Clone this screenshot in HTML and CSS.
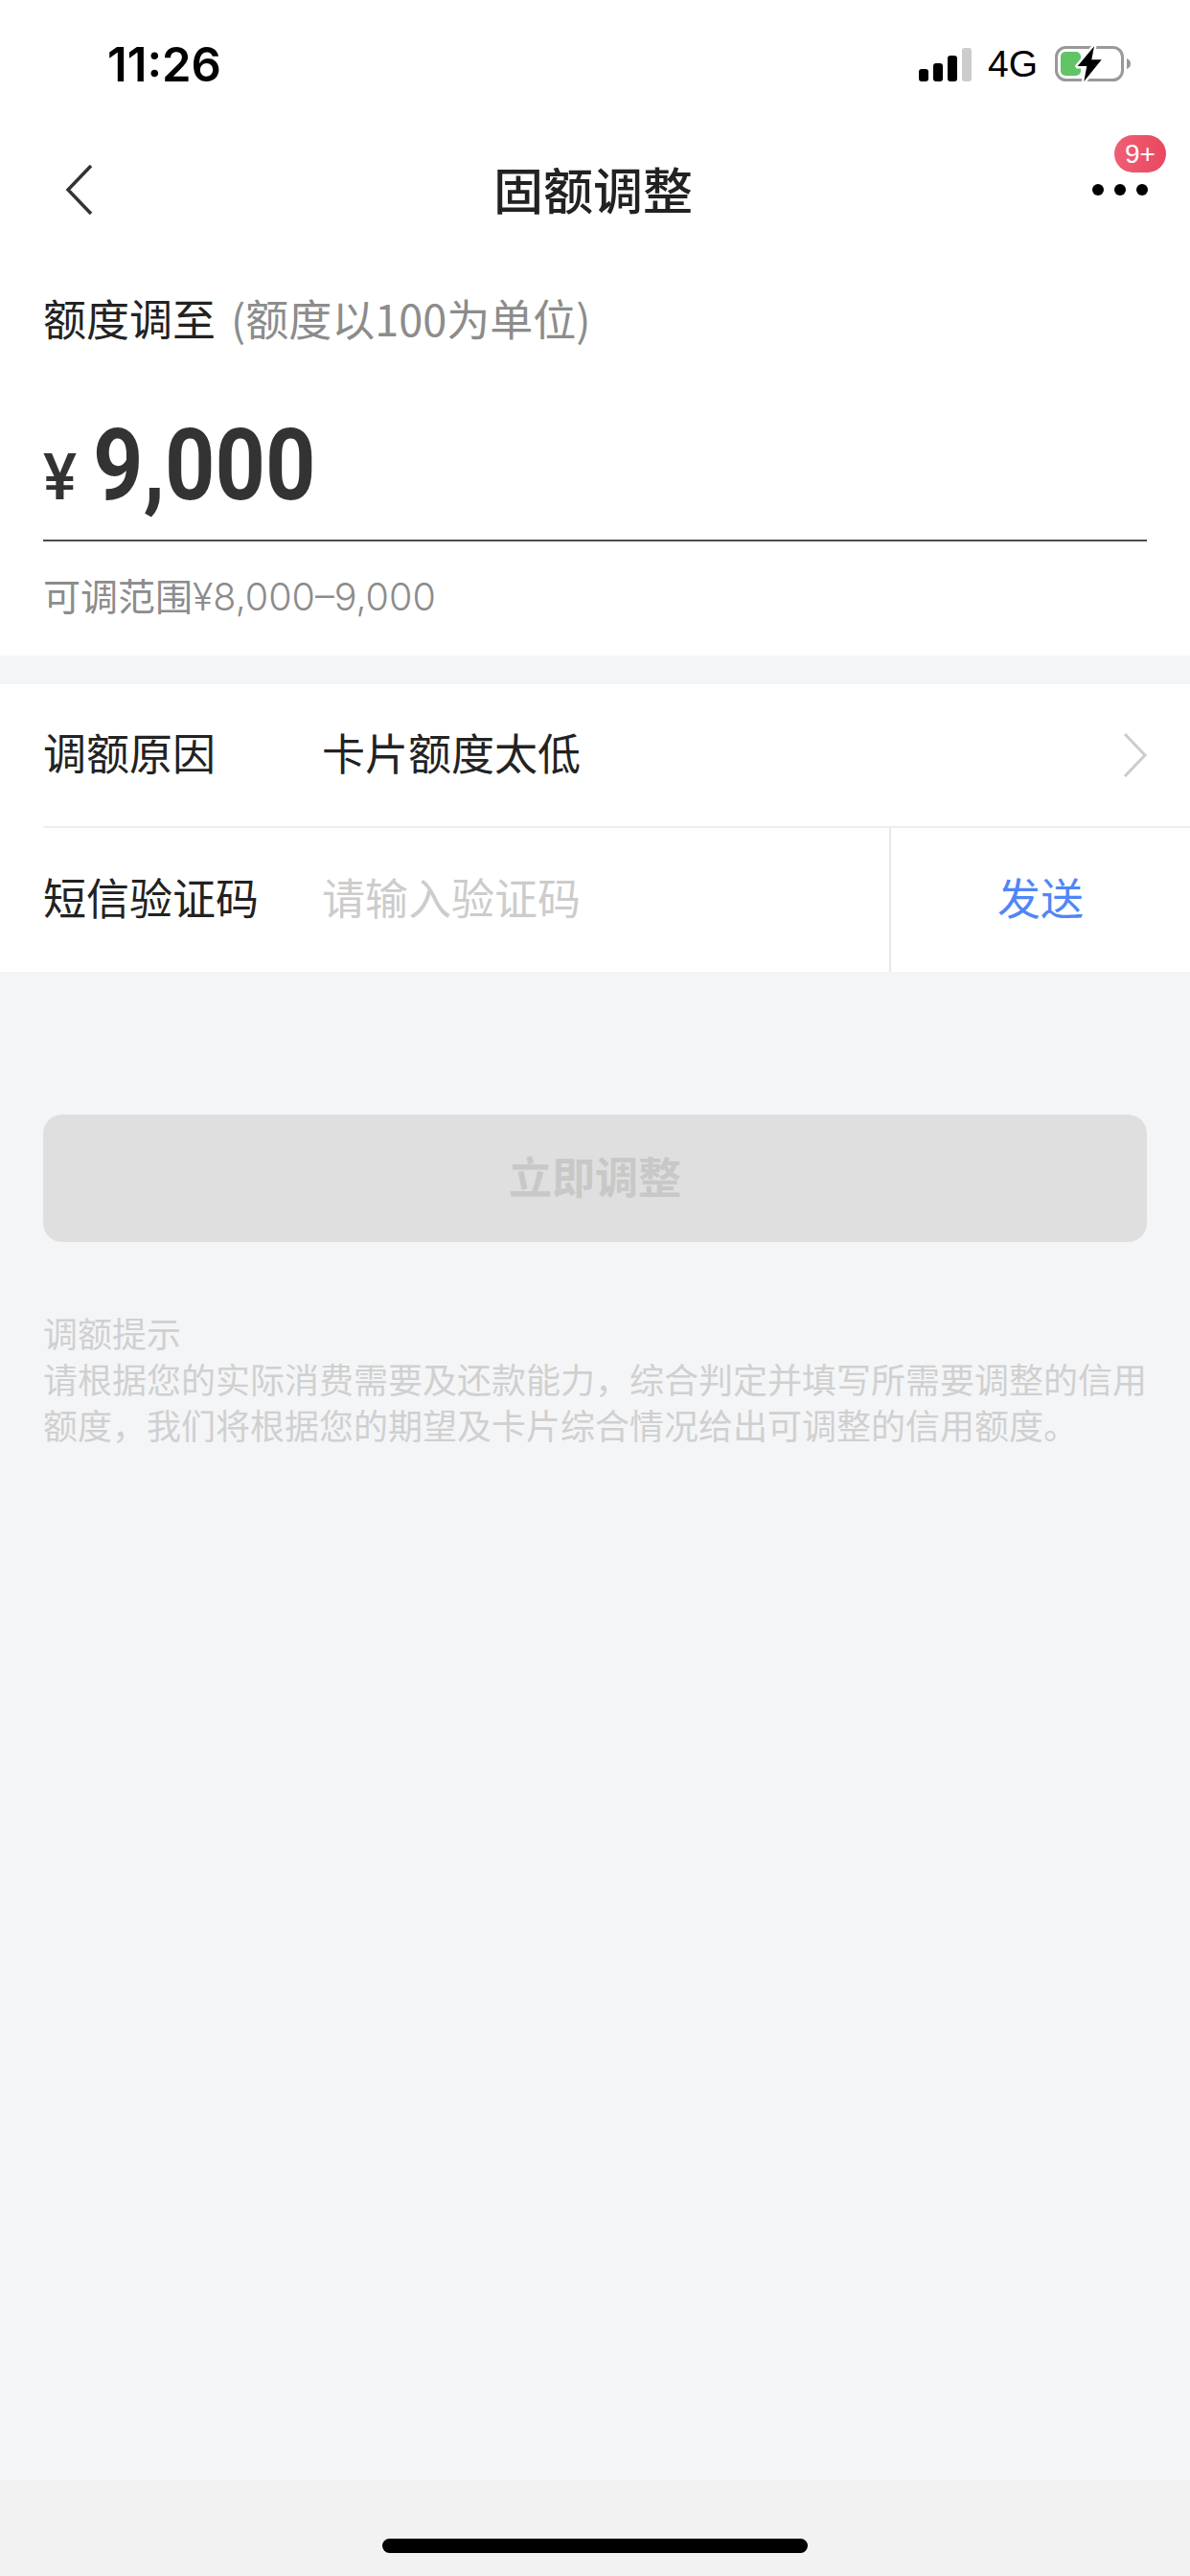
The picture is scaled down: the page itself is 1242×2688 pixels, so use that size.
FILE: index.html
```html
<!DOCTYPE html>
<html lang="zh-CN">
<head>
    <meta charset="UTF-8">
    <meta name="viewport" content="width=device-width, initial-scale=1.0">
    <title>固额调整</title>
    <link rel="stylesheet" href="styles.css">
</head>
<body>
<div class="page">
    <div class="statusBar">
        <span class="time">11:26</span>
        <div class="statusRight">
            <div class="signal">
                <i class="bar1"></i><i class="bar2"></i><i class="bar3"></i><i class="bar4"></i>
            </div>
            <span class="network">4G</span>
            <svg class="battery" width="90" height="46" viewBox="0 0 90 46">
                <rect x="5.500" y="5.500" width="69" height="34" rx="10" fill="none" stroke="#999" stroke-width="3"/>
                <path d="M79 17c3 1 4 3 4 5.500s-1 4.500-4 5.500z" fill="#999"/>
                <rect x="10" y="10" width="21" height="25" rx="5" fill="#62c466"/>
                <path d="M45 4.300L27.700 25h9.600l-3 16 18.400-22.700H42.300z" fill="#000" stroke="#fff" stroke-width="5" paint-order="stroke" stroke-linejoin="round"/>
            </svg>
        </div>
    </div>

    <div class="navBar">
        <svg class="backIcon" width="30" height="54" viewBox="0 0 30 54">
            <path d="M27 2L3 27l24 25" fill="none" stroke="#333" stroke-width="3.500"/>
        </svg>
        <div class="navTitle">固额调整</div>
        <div class="more">
            <i></i><i></i><i></i>
            <span class="badge">9+</span>
        </div>
    </div>

    <div class="amountCard">
        <div class="amountLabel">额度调至 <span class="amountUnit">(额度以100为单位)</span></div>
        <div class="amountRow">
            <span class="yen">¥</span>
            <span class="amountValue">9,000</span>
        </div>
        <div class="amountRange">可调范围<span class="rangeNum">¥8,000–9,000</span></div>
    </div>

    <div class="formCard">
        <div class="formRow">
            <span class="formLabel">调额原因</span>
            <span class="formValue">卡片额度太低</span>
            <svg class="arrowIcon" width="26" height="46" viewBox="0 0 26 46">
                <path d="M2 1l21 22L2 45" fill="none" stroke="#ccc" stroke-width="3"/>
            </svg>
        </div>
        <div class="formRow codeRow">
            <span class="formLabel">短信验证码</span>
            <span class="formValue placeholder">请输入验证码</span>
            <span class="sendBtn">发送</span>
        </div>
    </div>

    <div class="submitBtn">立即调整</div>

    <div class="tips">
        <div>调额提示</div>
        <div>请根据您的实际消费需要及还款能力，综合判定并填写所需要调整的信用额度，我们将根据您的期望及卡片综合情况给出可调整的信用额度。</div>
    </div>

    <div class="homeArea"><div class="homeBar"></div></div>
</div>
</body>
</html>
```
FILE: styles.css
```css
body {
    margin: 0;
    padding: 0;
    font-family: "Noto Sans CJK SC", "Liberation Sans", sans-serif;
}

.page {
    width: 1242px;
    height: 2688px;
    display: flex;
    flex-direction: column;
    background-color: #f4f5f7;
    overflow: hidden;
}

/* status bar */
.statusBar {
    height: 134px;
    flex: none;
    display: flex;
    justify-content: space-between;
    align-items: center;
    padding: 0 55px 0 112px;
    background-color: white;
}
.time {
    font-family: Inter, sans-serif;
    font-size: 49px;
    font-weight: 600;
    color: black;
}
.statusRight {
    display: flex;
    align-items: center;
}
.signal {
    display: flex;
    align-items: flex-end;
    gap: 5px;
    height: 35px;
}
.signal i {
    width: 10px;
    border-radius: 3px;
    background-color: black;
}
.bar1 { height: 13px; }
.bar2 { height: 19px; }
.bar3 { height: 27px; }
.signal .bar4 {
    height: 35px;
    background-color: #ccc;
}
.network {
    margin-left: 17px;
    font-family: "Liberation Sans", sans-serif;
    font-size: 39px;
    color: black;
}
.battery {
    margin-left: 14px;
}

/* nav */
.navBar {
    height: 128px;
    flex: none;
    display: flex;
    justify-content: space-between;
    align-items: center;
    padding: 0 44px 0 68px;
    background-color: white;
}
.navTitle {
    font-size: 52px;
    font-weight: 500;
    color: #222;
    line-height: 1;
    padding-bottom: 3px;
}
.more {
    position: relative;
    display: flex;
    gap: 11px;
}
.more i {
    width: 12px;
    height: 12px;
    border-radius: 50%;
    background-color: black;
}
.badge {
    position: absolute;
    top: -51px;
    left: 23px;
    width: 54px;
    height: 39px;
    border-radius: 20px;
    background: linear-gradient(90deg, #ee5f75, #e8485f);
    color: white;
    font-family: "Liberation Sans", sans-serif;
    font-size: 28px;
    line-height: 39px;
    text-align: center;
}

/* amount */
.amountCard {
    height: 422px;
    flex: none;
    box-sizing: border-box;
    padding: 40px 45px 0;
    background-color: white;
}
.amountLabel {
    font-size: 45px;
    line-height: 60px;
    color: #222;
}
.amountUnit {
    margin-left: 6px;
    color: #8c8c8c;
}
.amountRow {
    display: flex;
    align-items: baseline;
    height: 203px;
    box-sizing: border-box;
    border-bottom: 2px solid #4d4d4d;
    padding-top: 69px;
}
.yen {
    font-family: Roboto, sans-serif;
    font-size: 66px;
    font-weight: 500;
    color: #333;
    width: 52px;
    line-height: 110px;
}
.amountValue {
    display: inline-block;
    font-family: Roboto, sans-serif;
    font-size: 104px;
    font-weight: 700;
    line-height: 110px;
    color: #333;
    transform: scaleX(0.88);
    transform-origin: left;
}
.amountRange {
    margin-top: 28px;
    font-size: 39px;
    line-height: 54px;
    color: #8c8c8c;
}
.rangeNum {
    font-family: Inter, sans-serif;
    font-size: 39.500px;
    font-weight: 300;
}

/* form */
.formCard {
    margin-top: 30px;
    flex: none;
    padding-left: 45px;
    background-color: white;
}
.formRow {
    height: 148px;
    display: flex;
    align-items: center;
    border-bottom: 2px solid #eee;
    padding-right: 44px;
}
.formLabel {
    width: 291px;
    flex: none;
    padding-bottom: 7px;
    font-size: 45px;
    color: #222;
}
.formValue {
    flex: 1;
    padding-bottom: 7px;
    font-size: 45px;
    color: #222;
}
.formValue.placeholder {
    color: #ccc;
}
.codeRow {
    height: 150px;
    border-bottom: none;
    padding-right: 0;
}
.sendBtn {
    width: 314px;
    height: 100%;
    flex: none;
    box-sizing: border-box;
    padding-bottom: 7px;
    display: flex;
    justify-content: center;
    align-items: center;
    border-left: 2px solid #e8e8e8;
    font-size: 45px;
    color: #4f86f7;
}

/* bottom */
.submitBtn {
    height: 133px;
    flex: none;
    box-sizing: border-box;
    margin: 149px 45px 0;
    padding-bottom: 7px;
    display: flex;
    justify-content: center;
    align-items: center;
    border-radius: 20px;
    background-color: #dfdfdf;
    font-size: 45px;
    font-weight: 700;
    color: #c8c8c8;
}
.tips {
    margin: 70px 45px 0;
    font-size: 36px;
    line-height: 48px;
    color: #d0d0d0;
}
.homeArea {
    margin-top: auto;
    height: 100px;
    flex: none;
    display: flex;
    justify-content: center;
    background-color: #f2f2f2;
}
.homeBar {
    width: 444px;
    height: 15px;
    margin-top: 61px;
    border-radius: 8px;
    background-color: black;
}
```
